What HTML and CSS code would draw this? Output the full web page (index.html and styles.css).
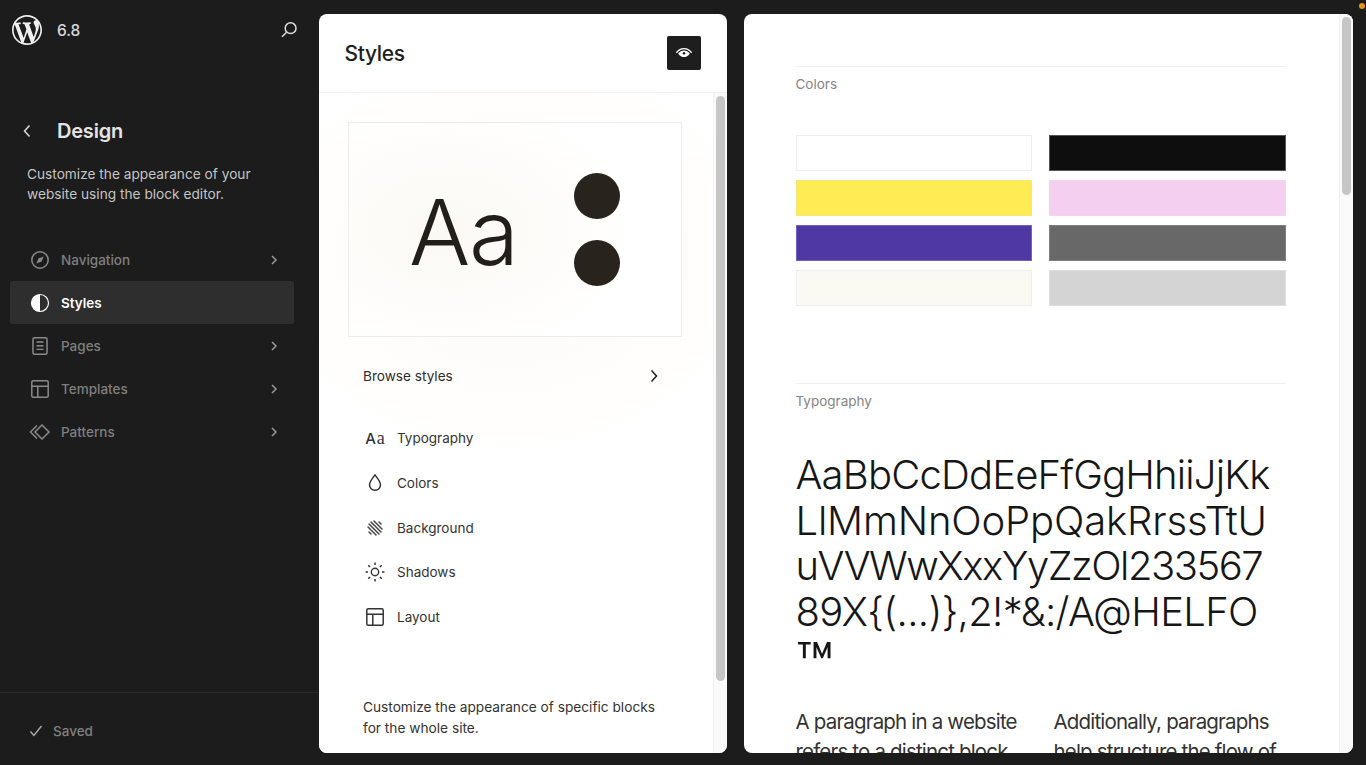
FILE: index.html
```html
<!DOCTYPE html>
<html lang="en">
<head>
<meta charset="utf-8">
<title>Styles – Design</title>
<link rel="stylesheet" href="styles.css">
</head>
<body>
<span class="rec-dot"></span>
<aside class="sidebar">
  <header class="brand">
    <svg class="wp" viewBox="0 0 20 20"><path fill="#f0f0f0" d="M20 10c0-5.51-4.49-10-10-10C4.48 0 0 4.49 0 10c0 5.52 4.48 10 10 10 5.51 0 10-4.48 10-10zM7.78 15.37L4.37 6.22c.55-.02 1.17-.08 1.17-.08.5-.06.44-1.13-.06-1.11 0 0-1.45.11-2.37.11-.18 0-.37 0-.58-.01C4.12 2.69 6.87 1.11 10 1.11c2.33 0 4.45.87 6.05 2.34-.68-.11-1.65.39-1.65 1.58 0 .74.45 1.36.9 2.1.35.61.55 1.36.55 2.46 0 1.49-1.4 5-1.4 5l-3.03-8.37c.54-.02.82-.17.82-.17.5-.05.44-1.25-.06-1.22 0 0-1.44.12-2.38.12-.87 0-2.33-.12-2.33-.12-.5-.03-.56 1.2-.06 1.22l.92.08 1.26 3.41zM17.41 10c.24-.64.74-1.87.43-4.25.7 1.29 1.05 2.71 1.05 4.25 0 3.29-1.73 6.24-4.4 7.78.97-2.59 1.94-5.2 2.92-7.78zM6.1 18.09C3.12 16.65 1.11 13.53 1.11 10c0-1.3.23-2.48.72-3.59C3.25 10.3 4.67 14.2 6.1 18.09zm4.03-6.63l2.58 6.98c-.86.29-1.76.45-2.71.45-.79 0-1.57-.11-2.29-.33.81-2.38 1.62-4.74 2.42-7.1z"/></svg>
    <span class="version">6.8</span>
    <svg class="search" viewBox="0 0 18 18"><circle cx="10.6" cy="7.2" r="5.4" fill="none" stroke="#ddd" stroke-width="1.5"/><path d="M6.6 11.2L2 15.8" stroke="#ddd" stroke-width="1.5" fill="none"/></svg>
  </header>
  <div class="title-row">
    <svg class="back" viewBox="0 0 10 14"><path d="M7.5 1.5L2.5 7l5 5.5" fill="none" stroke="#ddd" stroke-width="1.5"/></svg>
    <h1>Design</h1>
  </div>
  <p class="intro">Customize the appearance of your website using the block editor.</p>
  <nav class="nav">
    <a class="nav-item">
      <svg class="nav-icon" viewBox="0 0 20 20"><circle cx="10" cy="10" r="8.2" fill="none" stroke="#8a8a8a" stroke-width="1.5"/><path d="M13.6 6.4l-2 5.2-5.2 2 2-5.2z" fill="#8a8a8a"/></svg>
      <span>Navigation</span>
      <svg class="chev" viewBox="0 0 8 12"><path d="M2 2l4 4-4 4" fill="none" stroke="#999" stroke-width="1.5"/></svg>
    </a>
    <a class="nav-item active">
      <svg class="nav-icon" viewBox="0 0 20 20"><circle cx="10" cy="10" r="8.5" fill="none" stroke="#fff" stroke-width="1.2"/><path d="M10 1.5a8.5 8.5 0 0 0 0 17z" fill="#fff"/></svg>
      <span>Styles</span>
    </a>
    <a class="nav-item">
      <svg class="nav-icon" viewBox="0 0 20 20"><rect x="3" y="1.8" width="14" height="16.4" rx="1.5" fill="none" stroke="#8a8a8a" stroke-width="1.5"/><path d="M6.5 6h7M6.5 9.7h7M6.5 13.4h7" stroke="#8a8a8a" stroke-width="1.4"/></svg>
      <span>Pages</span>
      <svg class="chev" viewBox="0 0 8 12"><path d="M2 2l4 4-4 4" fill="none" stroke="#999" stroke-width="1.5"/></svg>
    </a>
    <a class="nav-item">
      <svg class="nav-icon" viewBox="0 0 20 20"><rect x="1.8" y="1.8" width="16.4" height="16.4" rx="1.5" fill="none" stroke="#8a8a8a" stroke-width="1.5"/><path d="M1.8 7.2h16.4M7.8 7.2v11" stroke="#8a8a8a" stroke-width="1.5"/></svg>
      <span>Templates</span>
      <svg class="chev" viewBox="0 0 8 12"><path d="M2 2l4 4-4 4" fill="none" stroke="#999" stroke-width="1.5"/></svg>
    </a>
    <a class="nav-item">
      <svg class="nav-icon wide" viewBox="0 0 24 20"><path d="M14 3l7 7-7 7-7-7zM9 3.5L2.5 10 9 16.5" fill="none" stroke="#8a8a8a" stroke-width="1.5"/></svg>
      <span>Patterns</span>
      <svg class="chev" viewBox="0 0 8 12"><path d="M2 2l4 4-4 4" fill="none" stroke="#999" stroke-width="1.5"/></svg>
    </a>
  </nav>
  <footer class="saved">
    <svg viewBox="0 0 14 14"><path d="M1.5 7.5l3.4 4L12.5 2" fill="none" stroke="#aaa" stroke-width="1.4"/></svg>
    <span>Saved</span>
  </footer>
</aside>

<main class="panels">
  <section class="panel styles-panel">
    <header class="panel-head">
      <h2>Styles</h2>
      <button class="eye-btn" aria-label="Preview">
        <svg viewBox="0 0 20 14"><path d="M1.500 6.200C4 3 7 1.600 10 1.600s6 1.400 8.500 4.600" fill="none" stroke="#fff" stroke-width="1.600"/><path d="M3.500 7C5.500 4.600 7.500 3.600 10 3.600s4.500 1 6.500 3.400c-2 2.800-4 4-6.500 4S5.500 9.800 3.500 7z" fill="#fff"/><circle cx="10" cy="6.800" r="1.400" fill="#1e1e1e"/></svg>
      </button>
    </header>
    <div class="panel-scroll">
      <div class="panel-body">
        <div class="style-card">
          <span class="card-aa">Aa</span>
          <div class="card-dots"><i></i><i></i></div>
        </div>
        <div class="browse">
          <span>Browse styles</span>
          <svg viewBox="0 0 10 14"><path d="M2.500 1.500l5 5.500-5 5.500" fill="none" stroke="#1e1e1e" stroke-width="1.500"/></svg>
        </div>
        <ul class="tools">
          <li><span class="tool-icon aa-icon"><b>A</b><em>a</em></span>Typography</li>
          <li><svg class="tool-icon" viewBox="0 0 20 20"><path d="M10 2c3.200 4 5.500 6.700 5.500 9.800a5.500 5.500 0 0 1-11 0C4.500 8.700 6.800 6 10 2z" fill="none" stroke="#333" stroke-width="1.500"/></svg>Colors</li>
          <li><svg class="tool-icon big" viewBox="0 0 24 24"><path fill="#444" d="M11.530 4.470a.75.75 0 1 0-1.060 1.060l8 8a.75.75 0 1 0 1.060-1.060l-8-8Zm5 1a.75.75 0 1 0-1.060 1.060l2 2a.75.75 0 1 0 1.060-1.060l-2-2Zm-11.060 10a.75.75 0 0 1 1.060 0l2 2a.75.75 0 1 1-1.060 1.060l-2-2a.75.75 0 0 1 0-1.060Zm.06-5a.75.75 0 0 0-1.060 1.060l8 8a.75.75 0 1 0 1.060-1.060l-8-8Zm-.06-3a.75.75 0 0 1 1.060 0l10 10a.75.75 0 1 1-1.060 1.060l-10-10a.75.75 0 0 1 0-1.060Zm3.060-2a.75.75 0 0 0-1.060 1.060l10 10a.75.75 0 1 0 1.060-1.060l-10-10Z"/></svg>Background</li>
          <li><svg class="tool-icon" viewBox="0 0 20 20"><circle cx="10" cy="10" r="3.700" fill="none" stroke="#333" stroke-width="1.400"/><path d="M10 .6v2.400M10 17v2.400M.6 10H3M17 10h2.400M3.300 3.300l1.700 1.700M15 15l1.700 1.700M3.300 16.700L5 15M15 5l1.700-1.700" stroke="#333" stroke-width="1.500" fill="none"/></svg>Shadows</li>
          <li><svg class="tool-icon" viewBox="0 0 20 20"><rect x="1.800" y="1.800" width="16.400" height="16.400" rx="1.500" fill="none" stroke="#333" stroke-width="1.500"/><path d="M1.800 7.200h16.400M7.800 7.200v11" stroke="#333" stroke-width="1.500"/></svg>Layout</li>
        </ul>
        <p class="blocks-note">Customize the appearance of specific blocks for the whole site.</p>
      </div>
      <div class="scrollbar"><div class="thumb panel-thumb"></div></div>
    </div>
  </section>

  <section class="panel preview-panel">
    <div class="preview-body">
      <section class="group colors-group">
        <h3>Colors</h3>
        <div class="swatches">
          <i class="sw white"></i><i class="sw black"></i>
          <i class="sw yellow"></i><i class="sw pink"></i>
          <i class="sw purple"></i><i class="sw gray"></i>
          <i class="sw cream"></i><i class="sw silver"></i>
        </div>
      </section>
      <section class="group type-group">
        <h3>Typography</h3>
        <div class="specimen">
          <div class="line-a">AaBbCcDdEeFfGgHhiiJjKk</div>
          <div class="line-b">LlMmNnOoPpQakRrssTtU</div>
          <div class="line-c">uVVWwXxxYyZzOl233567</div>
          <div class="line-d">89X{(...)},2!*&amp;:/A@HELFO</div>
          <div class="line-tm">™</div>
        </div>
        <div class="paras">
          <p>A paragraph in a website<br>refers to a distinct block</p>
          <p>Additionally, paragraphs<br>help structure the flow of</p>
        </div>
      </section>
    </div>
    <div class="scrollbar wide-bar"><div class="thumb preview-thumb"></div></div>
  </section>
</main>
</body>
</html>
```

FILE: styles.css
```css
* { box-sizing: border-box; }
html, body { height: 100%; }
body {
  margin: 0;
  height: 765px;
  overflow: hidden;
  display: flex;
  position: relative;
  background: #1c1c1c;
  font-family: Inter, "Liberation Sans", sans-serif;
  color: #1e1e1e;
  -webkit-font-smoothing: antialiased;
}
h1, h2, h3, p, ul { margin: 0; padding: 0; }
ul { list-style: none; }

.rec-dot {
  position: absolute;
  top: 3px; right: 1px;
  width: 6px; height: 6px;
  border-radius: 50%;
  background: #e8931a;
}

/* Sidebar */
.sidebar {
  width: 319px;
  flex: none;
  display: flex;
  flex-direction: column;
  height: 765px;
}
.brand {
  display: flex;
  align-items: center;
  height: 30px;
  margin-top: 15px;
  padding: 0 21px 0 12px;
}
.wp { width: 30px; height: 30px; flex: none; }
.version { margin-left: 15px; font-size: 15.5px; font-weight: 500; color: #d8d8d8; }
.search { width: 18px; height: 18px; margin-left: auto; }
.title-row {
  display: flex;
  align-items: center;
  margin-top: 71px;
  padding-left: 22px;
  height: 30px;
}
.back { width: 10px; height: 14px; flex: none; }
.title-row h1 { margin-left: 25px; font-size: 20px; font-weight: 600; color: #e4e4e4; letter-spacing: -.2px; }
.intro {
  margin: 18px 50px 0 27px;
  font-size: 13.7px;
  line-height: 20px;
  color: #c4c4c4;
}
.nav { margin-top: 34px; padding: 0 25px 0 10px; }
.nav-item {
  height: 43px;
  display: flex;
  align-items: center;
  padding: 0 16px 0 20px;
  font-size: 13.5px;
  font-weight: 500;
  color: #7f7f7f;
}
.nav-item.active { background: #2e2e2e; color: #fff; border-radius: 2px; font-weight: 600; }
.nav-icon { width: 20px; height: 20px; flex: none; margin-right: 11px; }
.nav-icon.wide { width: 24px; margin-left: -2px; margin-right: 9px; }
.chev { width: 8px; height: 12px; margin-left: auto; }
.saved {
  margin-top: auto;
  height: 73px;
  border-top: 1px solid #2b2b2b;
  display: flex;
  align-items: center;
  padding: 4px 0 0 29px;
  font-size: 13.5px;
  font-weight: 500;
  color: #808080;
}
.saved svg { width: 14px; height: 14px; margin-right: 10px; }

/* Panels */
.panels {
  flex: 1;
  display: flex;
  gap: 17px;
  padding: 14px 13px 12px 0;
  min-width: 0;
}
.panel {
  background: #fff;
  border-radius: 8px;
  overflow: hidden;
}
.styles-panel { width: 408px; flex: none; display: flex; flex-direction: column; }
.preview-panel { flex: 1; display: flex; }

.panel-head {
  height: 79px;
  flex: none;
  border-bottom: 1px solid #f0f0f0;
  display: flex;
  align-items: center;
  justify-content: space-between;
  padding: 0 26px 0 25.5px;
}
.panel-head h2 { font-size: 21px; font-weight: 500; letter-spacing: -.35px; color: #1e1e1e; }
.eye-btn {
  width: 34px; height: 34px;
  padding: 0;
  border: 0;
  border-radius: 2px;
  background: #1e1e1e;
  display: flex;
  align-items: center;
  justify-content: center;
}
.eye-btn svg { width: 18px; height: 13px; }

.panel-scroll { flex: 1; min-height: 0; display: flex; }
.panel-body {
  flex: 1;
  min-width: 0;
  overflow: hidden;
  padding: 29px 31px 0 29px;
  background: radial-gradient(ellipse 260px 210px at 190px 160px, #fcfaf6 0%, #fffefd 80%, #fff 100%);
}
.scrollbar {
  width: 14px;
  flex: none;
  padding: 3px 2px 0 2px;
  background: #fafafa;
  border-left: 1px solid #f0f0f0;
}
.thumb { width: 100%; border-radius: 5px; background: #c6c6c6; }
.panel-thumb { height: 585px; }
.preview-thumb { height: 178px; }

.style-card {
  height: 215px;
  border: 1px solid #ececec;
  display: flex;
  align-items: center;
  background: radial-gradient(ellipse 190px 130px at 30% 50%, #fbf9f4 0%, #fefdfb 70%, #fff 100%);
}
.card-aa {
  margin: 6px 0 0 60px;
  font-size: 91px;
  font-weight: 350;
  letter-spacing: -1.2px;
  color: #221f1a;
  line-height: 1;
}
.card-dots { margin-left: auto; margin-right: 61px; display: flex; flex-direction: column; gap: 21px; }
.card-dots i { display: block; width: 46px; height: 46px; border-radius: 50%; background: #28241d; }

.browse {
  display: flex;
  align-items: center;
  justify-content: space-between;
  height: 20px;
  margin-top: 29px;
  padding: 0 23px 0 15px;
  font-size: 13.6px;
  font-weight: 400;
  color: #2c2c2c;
}
.browse svg { width: 10px; height: 14px; }

.tools { margin-top: 30px; }
.tools li {
  height: 44.7px;
  display: flex;
  align-items: center;
  padding-left: 17px;
  font-size: 13.5px;
  color: #333;
}
.tool-icon { width: 20px; height: 20px; flex: none; margin-right: 12px; }
.tool-icon.big { width: 24px; height: 24px; margin: 0 10px 0 -2px; }
.aa-icon { display: flex; align-items: baseline; justify-content: center; line-height: 20px; font-size: 15px; color: #333; }
.aa-icon b { font-family: Inter, sans-serif; font-weight: 500; }
.aa-icon em { font-family: "Liberation Serif", serif; font-style: normal; font-size: 18px; margin-left: 1px; }

.blocks-note {
  margin-top: 58px;
  padding: 0 20px 0 15px;
  font-size: 13.7px;
  line-height: 20.5px;
  color: #333;
}

/* Preview */
.preview-body { flex: 1; min-width: 0; overflow: hidden; padding: 52px 53px 0 51.5px; }
.group { border-top: 1px solid #f0f0f0; }
.group h3 { padding-top: 8px; font-size: 13.5px; line-height: 18px; font-weight: 400; color: #858585; }
.swatches {
  margin-top: 42px;
  display: grid;
  grid-template-columns: 236.5px 237px;
  column-gap: 17px;
  row-gap: 9px;
}
.sw { display: block; height: 36px; border: 1px solid transparent; }
.white { background: #fff; border-color: #eeeeee; }
.black { background: #0e0e0e; border-color: #555; }
.yellow { background: #ffec55; border-color: #f5e67a; }
.pink { background: #f4cff0; border-color: #f0d6ee; }
.purple { background: #4f38a3; border-color: #7363c0; }
.gray { background: #686868; border-color: #808080; }
.cream { background: #faf9f2; border-color: #eeeeea; }
.silver { background: #d4d4d4; border-color: #dedede; }

.type-group { margin-top: 77px; }
.specimen {
  margin-top: 42px;
  font-size: 40px;
  line-height: 45.5px;
  font-weight: 350;
  color: #161616;
  white-space: nowrap;
}
.line-a { letter-spacing: -.83px; }
.line-b { letter-spacing: -.15px; }
.line-c { letter-spacing: -1.5px; }
.line-d { letter-spacing: -.67px; }
.line-tm { height: 45.5px; font-size: 62px; line-height: 62px; font-weight: 400; overflow: visible; }
.paras {
  margin-top: 27px;
  display: grid;
  grid-template-columns: 258px 1fr;
  font-size: 20.5px;
  line-height: 30px;
  letter-spacing: -.82px;
  color: #333;
  white-space: nowrap;
}
```
